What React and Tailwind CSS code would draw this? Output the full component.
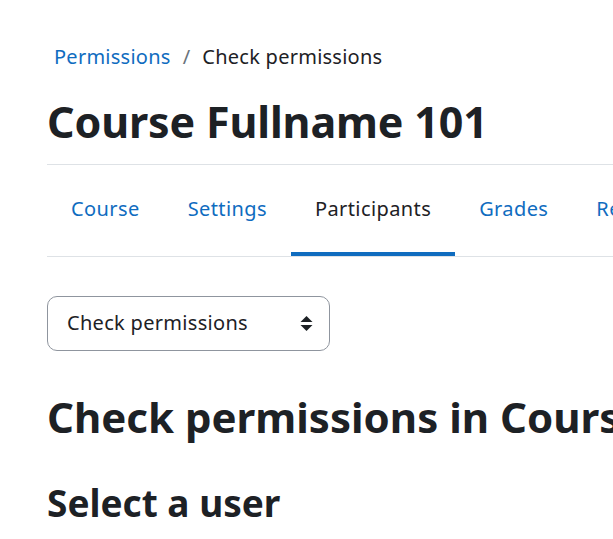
const TABS = [
  { label: 'Course' },
  { label: 'Settings' },
  { label: 'Participants', active: true },
  { label: 'Grades' },
  { label: 'Reports' },
  { label: 'More' },
];

function SortArrows() {
  return (
    <svg width="13" height="15" viewBox="0 0 13 15" className="shrink-0">
      <path d="M6.5 0 L12.5 6 L0.5 6 Z" fill="#1d2125" />
      <path d="M0.5 9 L12.5 9 L6.5 15 Z" fill="#1d2125" />
    </svg>
  );
}

export default function App() {
  return (
    <div className="h-[539px] w-[613px] overflow-hidden bg-white font-['Noto_Sans',sans-serif] text-[#1d2125]">
      <div className="w-[1200px] pl-[47px] pt-[42px]">
        {/* breadcrumb */}
        <nav className="flex items-center whitespace-nowrap pl-[7px] text-[20px] leading-[30px] tracking-[0.25px]">
          <a className="text-[#0f6cbf]">Permissions</a>
          <span className="px-[12px] text-[#6a737b]">/</span>
          <span>Check permissions</span>
        </nav>

        <div className="border-b border-[#dee2e6] pb-[16px]">
          <h1 className="mt-[24px] whitespace-nowrap text-[43px] font-bold leading-[1.2] tracking-[-0.15px]">Course Fullname 101</h1>
        </div>

        {/* secondary navigation */}
        <ul className="flex border-b border-[#dee2e6] text-[20px] leading-[30px] tracking-[0.4px]">
          {TABS.map(t => (
            <li key={t.label}>
              <a className={`block whitespace-nowrap border-b-4 px-6 pb-[28px] pt-[29px] ${t.active ? 'border-[#0f6cbf] text-[#1d2125]' : 'border-transparent text-[#0f6cbf]'}`}>
                {t.label}
              </a>
            </li>
          ))}
        </ul>

        <div className="mt-[39px] flex h-[55px] w-[283px] items-center justify-between rounded-[10px] border border-[#8f959e] pl-[19px] pr-[16px] text-[20px] tracking-[0.3px]">
          <span>Check permissions</span>
          <SortArrows />
        </div>

        <h2 className="mt-[41px] whitespace-nowrap text-[42px] font-bold leading-[1.2]">Check permissions in Course Fullname 101</h2>
        <h3 className="mt-[39px] whitespace-nowrap text-[37px] font-bold leading-[1.2]">Select a user</h3>
      </div>
    </div>
  );
}
